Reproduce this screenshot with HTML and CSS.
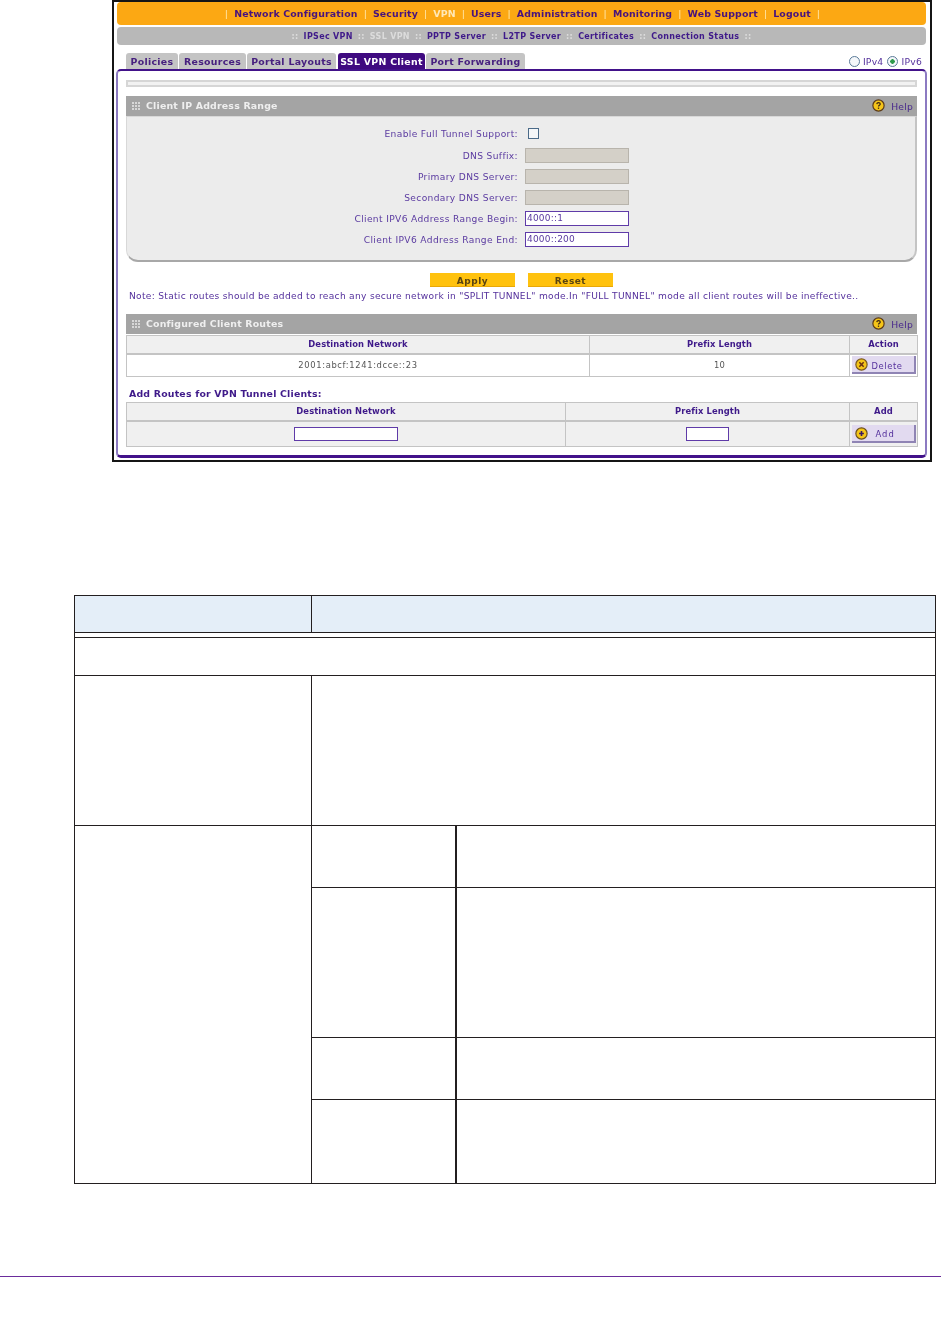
FILE: index.html
```html
<!DOCTYPE html>
<html lang="en">
<head>
<meta charset="utf-8">
<title>SSL VPN Client</title>
<link rel="stylesheet" href="styles.css">
</head>
<body>
<svg class="defs" width="0" height="0" aria-hidden="true">
  <symbol id="grip" viewBox="0 0 8 8"><g fill="#d8d8d8"><rect x="0" y="0" width="2" height="2"/><rect x="3" y="0" width="2" height="2"/><rect x="6" y="0" width="2" height="2"/><rect x="0" y="3" width="2" height="2"/><rect x="3" y="3" width="2" height="2"/><rect x="6" y="3" width="2" height="2"/><rect x="0" y="6" width="2" height="2"/><rect x="3" y="6" width="2" height="2"/><rect x="6" y="6" width="2" height="2"/></g></symbol>
  <symbol id="help" viewBox="0 0 12 12"><circle cx="6" cy="6" r="5.2" fill="#f5c518" stroke="#5a3a1a" stroke-width="1.1"/><path d="M4.4 4.7c.1-1 .8-1.4 1.6-1.4s1.6.5 1.6 1.3c0 1.2-1.6 1.2-1.6 2.4" fill="none" stroke="#3a2410" stroke-width="1.1"/><rect x="5.4" y="7.9" width="1.2" height="1.2" fill="#3a2410"/></symbol>
  <symbol id="del" viewBox="0 0 12 12"><circle cx="6" cy="6" r="5.2" fill="#f5c518" stroke="#7a5a20" stroke-width="1.1"/><path d="M4 4l4 4M8 4l-4 4" stroke="#6a3010" stroke-width="1.4"/></symbol>
  <symbol id="add" viewBox="0 0 12 12"><circle cx="6" cy="6" r="5.2" fill="#f5c518" stroke="#6a5020" stroke-width="1.1"/><path d="M3.8 6h4.4M6 3.8v4.4" stroke="#3a1a60" stroke-width="1.5"/></symbol>
</svg>

<div class="shot">
  <nav class="topnav">
    <span class="sep">|</span><a>Network Configuration</a><span class="sep">|</span><a>Security</a><span class="sep">|</span><a class="cur">VPN</a><span class="sep">|</span><a>Users</a><span class="sep">|</span><a>Administration</a><span class="sep">|</span><a>Monitoring</a><span class="sep">|</span><a>Web Support</a><span class="sep">|</span><a>Logout</a><span class="sep">|</span>
  </nav>
  <nav class="subnav">
    <span class="dots">::</span><a>IPSec VPN</a><span class="dots">::</span><a class="cur">SSL VPN</a><span class="dots">::</span><a>PPTP Server</a><span class="dots">::</span><a>L2TP Server</a><span class="dots">::</span><a>Certificates</a><span class="dots">::</span><a>Connection Status</a><span class="dots">::</span>
  </nav>
  <div class="tabrow">
    <a class="tab t1">Policies</a><a class="tab t2">Resources</a><a class="tab t3">Portal Layouts</a><a class="tab t4 on">SSL VPN Client</a><a class="tab t5">Port Forwarding</a>
    <div class="ipver">
      <span class="radio"></span><span>IPv4</span><span class="radio sel"></span><span>IPv6</span>
    </div>
  </div>
  <div class="panel">
    <div class="bar"></div>
    <div class="sechead first">
      <svg class="grip"><use href="#grip"/></svg><span class="sectitle">Client IP Address Range</span>
      <svg class="qicon"><use href="#help"/></svg><span class="help">Help</span>
    </div>
    <div class="formbox">
      <div class="frow chk"><label>Enable Full Tunnel Support:</label><span class="check"></span></div>
      <div class="frow"><label>DNS Suffix:</label><span class="inp dis"></span></div>
      <div class="frow"><label>Primary DNS Server:</label><span class="inp dis"></span></div>
      <div class="frow"><label>Secondary DNS Server:</label><span class="inp dis"></span></div>
      <div class="frow"><label>Client IPV6 Address Range Begin:</label><span class="inp">4000::1</span></div>
      <div class="frow"><label>Client IPV6 Address Range End:</label><span class="inp">4000::200</span></div>
    </div>
    <div class="actions"><span class="btn">Apply</span><span class="btn">Reset</span></div>
    <p class="note">Note: Static routes should be added to reach any secure network in "SPLIT TUNNEL" mode.In "FULL TUNNEL" mode all client routes will be ineffective..</p>
    <div class="sechead">
      <svg class="grip"><use href="#grip"/></svg><span class="sectitle">Configured Client Routes</span>
      <svg class="qicon"><use href="#help"/></svg><span class="help">Help</span>
    </div>
    <table class="rt rt1">
      <tr class="hd"><th class="c1">Destination Network</th><th class="c2">Prefix Length</th><th class="c3">Action</th></tr>
      <tr class="bd"><td class="addr">2001:abcf:1241:dcce::23</td><td>10</td><td class="bc"><span class="ibtn"><svg><use href="#del"/></svg><span>Delete</span></span></td></tr>
    </table>
    <h4 class="addhead">Add Routes for VPN Tunnel Clients:</h4>
    <table class="rt rt2">
      <tr class="hd"><th class="c1">Destination Network</th><th class="c2">Prefix Length</th><th class="c3">Add</th></tr>
      <tr class="bd grey"><td><span class="inp wide"></span></td><td><span class="inp small"></span></td><td class="bc"><span class="ibtn plus"><svg><use href="#add"/></svg><span>Add</span></span></td></tr>
    </table>
  </div>
</div>

<table class="doc">
  <colgroup><col class="d1"><col class="d2"><col class="d3"></colgroup>
  <tr class="dh"><td></td><td colspan="2"></td></tr>
  <tr class="gap"><td colspan="3"></td></tr>
  <tr class="r38"><td colspan="3"></td></tr>
  <tr class="r150"><td></td><td colspan="2"></td></tr>
  <tr class="r62"><td rowspan="4"></td><td></td><td class="thick"></td></tr>
  <tr class="r150"><td></td><td class="thick"></td></tr>
  <tr class="r62"><td></td><td class="thick"></td></tr>
  <tr class="r84"><td></td><td class="thick"></td></tr>
</table>
<div class="footrule"></div>
</body>
</html>
```
FILE: styles.css
```css
* { box-sizing: border-box; }
html, body { margin: 0; padding: 0; background: #fff; }
body { width: 941px; height: 1344px; overflow: hidden; font-family: "DejaVu Sans", Verdana, sans-serif; font-size: 9px; color: #54309c; }
.defs { position: absolute; }

.shot { width: 820px; height: 462px; margin-left: 112px; border: 2px solid #151515; padding: 0 4px 0 3px; display: flex; flex-direction: column; filter: blur(.35px); background: #fff; }

.topnav { height: 23px; background: #fca813; border-radius: 4px; display: flex; justify-content: center; align-items: center; gap: 6px; padding-left: 2px; font-weight: bold; font-size: 9.4px; letter-spacing: .15px; color: #47127e; }
.topnav .sep { color: #ffe9b0; font-weight: normal; }
.topnav .cur { color: #ffe8b8; }

.subnav { height: 18px; margin-top: 2px; background: #b8b8b8; border-radius: 4px; display: flex; justify-content: center; align-items: center; gap: 5px; font-weight: bold; font-size: 8px; letter-spacing: .32px; color: #3f1a8a; }
.subnav .dots { color: #ddd; }
.subnav .cur { color: #dcdcdc; }

.tabrow { height: 16px; margin-top: 8px; display: flex; align-items: stretch; padding-left: 9px; font-weight: bold; font-size: 9.4px; letter-spacing: .3px; color: #47207f; }
.tab { background: #c4c4c4; border-radius: 3px 3px 0 0; display: flex; align-items: center; justify-content: center; margin-right: 1px; }
.t1 { width: 52px; } .t2 { width: 67px; } .t3 { width: 89px; margin-right: 2px; } .t4 { width: 87px; } .t5 { width: 99px; }
.tab.on { background: #3f0a80; color: #fff; }
.ipver { margin-left: auto; margin-top: 1px; display: flex; align-items: center; gap: 3px; font-weight: normal; font-size: 9.2px; letter-spacing: .25px; color: #54309c; padding-right: 4px; height: 14px; }
.radio { width: 11px; height: 11px; border: 1px solid #5a7a98; border-radius: 50%; background: #f4f7fa; position: relative; }
.radio.sel { margin-left: 1px; background: radial-gradient(circle, #2f9a4c 0 2px, #f4f7fa 2.5px); }

.panel { width: 811px; height: 389px; margin-left: -1px; border: 2px solid #8c7ac2; border-top-color: #42128a; border-bottom: 3px solid #42128a; border-radius: 5px; padding: 9px 8px 0; }
.bar { height: 7px; background: #f2f2f2; border: 2px solid #d6d6d6; }
.sechead { height: 20px; background: #a4a4a4; display: flex; align-items: center; padding: 0 4px 0 6px; margin-top: 9px; }
.grip { width: 8px; height: 8px; flex: none; }
.sectitle { margin-left: 6px; margin-top: -1px; font-weight: bold; font-size: 9.4px; letter-spacing: .2px; color: #efefef; }
.qicon { width: 13px; height: 13px; margin-left: auto; margin-top: -1px; }
.help { margin-left: 6px; margin-top: 1px; font-size: 9.2px; letter-spacing: .2px; color: #48288c; }

.formbox { height: 146px; background: #ececec; border: 1px solid #d8d8d8; border-bottom: 2px solid #a8a8a8; border-right: 2px solid #c4c4c4; border-radius: 0 0 12px 12px; padding-top: 7px; }
.frow { height: 21px; display: flex; align-items: center; }
.frow label { width: 391px; text-align: right; font-size: 9.1px; letter-spacing: .36px; color: #5a3aa0; }
.inp { display: block; width: 104px; height: 15px; margin-left: 7px; background: #fff; border: 1px solid #5f3ba8; font-size: 9px; letter-spacing: .2px; line-height: 13px; padding-left: 1px; color: #5a3aa0; }
.inp.dis { background: #d4d0c8; border: 1px solid #b8b4ac; }
.check { width: 11px; height: 11px; margin-left: 10px; background: #f4f6f8; border: 1px solid #4a6a88; }
.frow.chk { margin-top: -1px; margin-bottom: 1px; }

.actions { display: flex; gap: 13px; margin-top: 11px; padding-left: 304px; }
.btn { width: 85px; height: 14px; background: #ffc20e; border-bottom: 1px solid #e8a808; text-align: center; font-weight: bold; font-size: 9px; letter-spacing: .5px; line-height: 16px; color: #5a4410; }
.note { margin: 2px 0 0 3px; height: 16px; font-size: 9.1px; letter-spacing: .29px; line-height: 14px; color: #54309c; white-space: nowrap; }
.note + .sechead { margin-top: 9px; }

.rt { width: 791px; border-collapse: collapse; table-layout: fixed; margin: 0; }
.rt th, .rt td { border: 1px solid #c4c4c4; text-align: center; padding: 0; }
.rt th { background: #f0f0f0; border-bottom-width: 2px; font-size: 8.4px; letter-spacing: .1px; color: #3f1a8a; }
.rt td { font-size: 8.4px; letter-spacing: .2px; color: #555; }
.rt td.addr { letter-spacing: .63px; }
.rt1 { margin-top: 1px; }
.rt1 .hd { height: 18px; }
.rt1 .bd { height: 23px; }
.rt1 .c1 { width: 463px; } .rt1 .c2 { width: 260px; } .rt1 .c3 { width: 68px; }
.rt2 .hd { height: 18px; }
.rt2 .bd { height: 26px; }
.rt2 .bd td { background: #f0f0f0; }
.rt2 .c1 { width: 439px; } .rt2 .c2 { width: 284px; } .rt2 .c3 { width: 68px; }
.bc { padding: 0 1px !important; }
.ibtn { display: flex; align-items: center; width: 64px; height: 18px; margin: 0 auto; background: #e2daf0; border-right: 2px solid #8f84b4; border-bottom: 2px solid #8f84b4; padding-left: 3px; font-size: 8.4px; letter-spacing: .6px; color: #54309c; text-align: left; }
.ibtn svg { width: 13px; height: 13px; flex: none; }
.ibtn span { margin-left: 4px; margin-top: 3px; }
.ibtn.plus { margin-top: 1px; }
.ibtn.plus span { margin-left: 8px; margin-top: 1px; letter-spacing: 1px; }
.rt td .inp { margin: 0 auto; height: 14px; background: #fff; }
.inp.wide { width: 104px; }
.inp.small { width: 43px; }
.addhead { margin: 10px 0 0 3px; height: 15px; font-size: 9.4px; letter-spacing: .2px; line-height: 14px; font-weight: bold; color: #3f1a8a; }

.doc { margin: 133px 0 0 74px; width: 861px; border-collapse: collapse; table-layout: fixed; }
.doc td { border: 1px solid #231f20; padding: 0; }
.d1 { width: 237px; } .d2 { width: 144px; } .d3 { width: 480px; }
.dh { height: 37px; }
.dh td { background: #e4eef8; }
.gap { height: 5px; }
.r38 { height: 38px; }
.r150 { height: 150px; }
.r62 { height: 62px; }
.r84 { height: 84px; }
.doc td.thick { border-left-width: 2px; }
.footrule { height: 1px; margin-top: 92px; background: #6a2c9c; }
```
